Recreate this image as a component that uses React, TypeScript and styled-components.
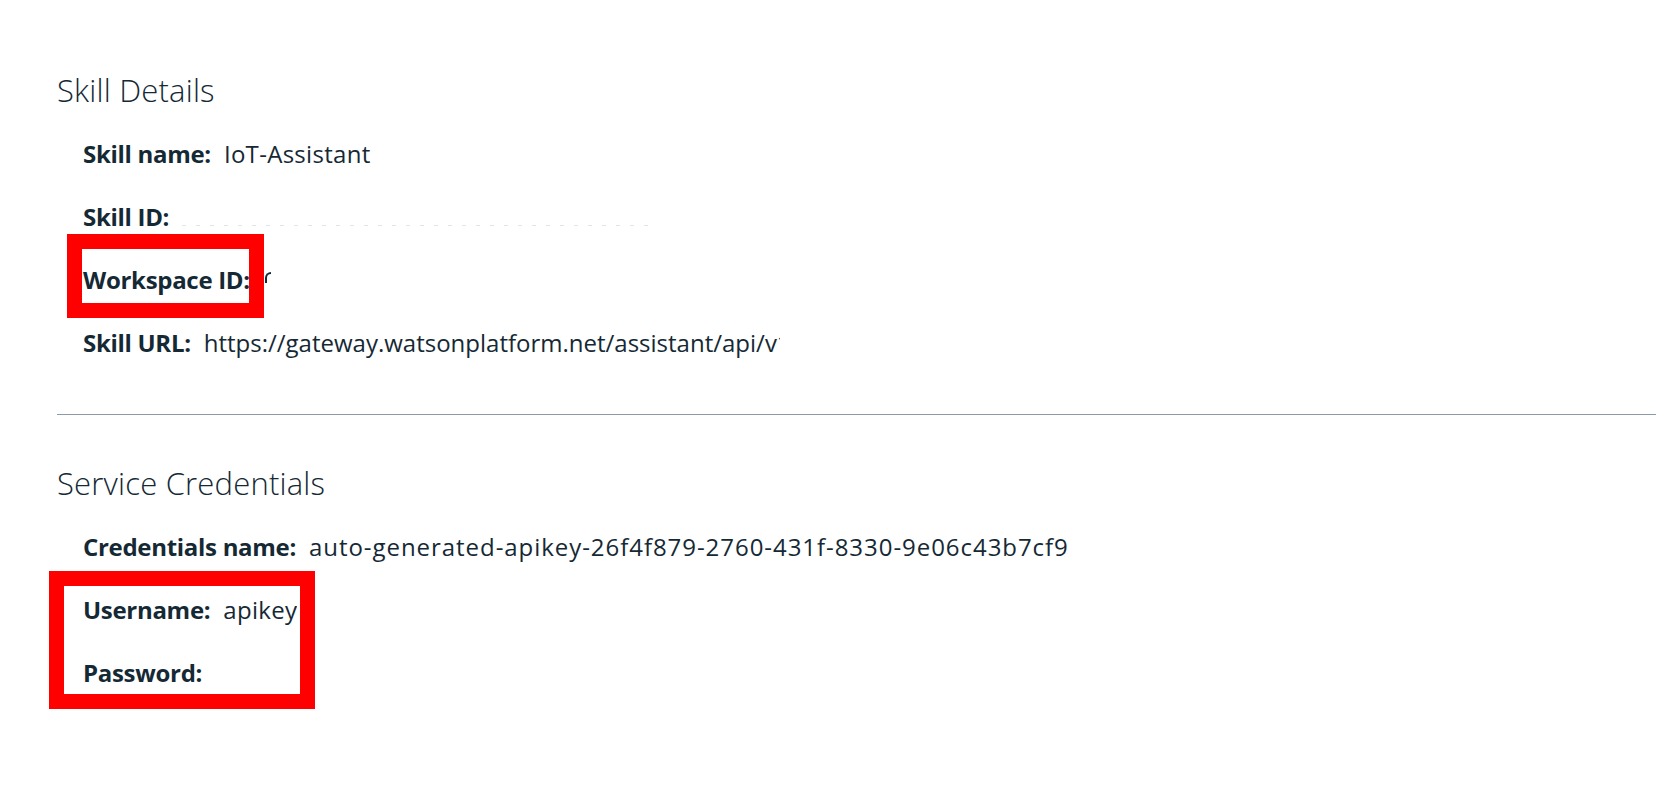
import React from "react";
import styled, { createGlobalStyle } from "styled-components";

const GlobalStyle = createGlobalStyle`
  html, body {
    margin: 0;
    padding: 0;
    background: #ffffff;
  }
  body {
    font-family: "Open Sans", "Noto Sans", "Liberation Sans", sans-serif;
    color: #152935;
  }
`;

const Page = styled.main`
  width: 1656px;
  height: 812px;
  overflow: hidden;
  padding-top: 70px;
  box-sizing: border-box;
`;

const Section = styled.section`
  padding-left: 57px;
`;

const Heading = styled.h2`
  margin: 0;
  font-size: 31px;
  font-weight: 300;
  line-height: 40px;
  letter-spacing: 0.2px;
  color: #152935;
`;

const List = styled.div`
  display: flex;
  flex-direction: column;
  gap: 31px;
  margin-top: 28px;
  padding-left: 26px;
`;

const Row = styled.div`
  position: relative;
  display: flex;
  align-items: baseline;
  font-size: 24px;
  line-height: 32px;
  height: 32px;
  white-space: nowrap;
`;

const Label = styled.strong`
  font-weight: 700;
  letter-spacing: -0.3px;
  margin-right: 13px;
`;

const Value = styled.span<{ $clip?: number; $spacing?: number }>`
  font-weight: 400;
  display: inline-block;
  overflow: hidden;
  letter-spacing: ${(p) => p.$spacing ?? 0}px;
  ${(p) => (p.$clip ? `max-width: ${p.$clip}px;` : "")}
`;

const Remnant = styled.span<{ $width: number }>`
  display: inline-block;
  align-self: flex-end;
  margin-bottom: 7px;
  width: ${(p) => p.$width}px;
  height: 1px;
  background: repeating-linear-gradient(
    to right,
    #e2e4e6 0 4px,
    transparent 4px 14px
  );
`;

const Arc = styled.span`
  display: inline-block;
  align-self: flex-start;
  box-sizing: border-box;
  width: 6px;
  height: 11px;
  margin-top: 8px;
  margin-left: 2px;
  border-left: 2px solid #152935;
  border-top: 2px solid #152935;
  border-radius: 6px 0 0 0;
`;

const Divider = styled.hr`
  margin: 55px 0 48px 57px;
  border: 0;
  height: 1px;
  background: #8c9ba5;
`;

const Highlight = styled.span<{ $top: number; $left: number; $w: number; $h: number }>`
  position: absolute;
  top: ${(p) => p.$top}px;
  left: ${(p) => p.$left}px;
  width: ${(p) => p.$w}px;
  height: ${(p) => p.$h}px;
  box-sizing: border-box;
  border: 15px solid #ff0000;
  pointer-events: none;
`;

const Group = styled.div`
  position: relative;
  display: flex;
  flex-direction: column;
  gap: 31px;
`;

export default function App() {
  return (
    <>
      <GlobalStyle />
      <Page>
        <Section>
          <Heading>Skill Details</Heading>
          <List>
            <Row>
              <Label>Skill name:</Label>
              <Value $spacing={0.3}>IoT-Assistant</Value>
            </Row>
            <Row>
              <Label>Skill ID:</Label>
              <Remnant $width={470} />
            </Row>
            <Row>
              <Label>Workspace ID:</Label>
              <Arc />
              <Highlight $top={-30} $left={-16} $w={197} $h={84} />
            </Row>
            <Row>
              <Label>Skill URL:</Label>
              <Value $clip={576}>https://gateway.watsonplatform.net/assistant/api/v1</Value>
            </Row>
          </List>
        </Section>
        <Divider />
        <Section>
          <Heading>Service Credentials</Heading>
          <List>
            <Row>
              <Label>Credentials name:</Label>
              <Value $spacing={0.95}>auto-generated-apikey-26f4f879-2760-431f-8330-9e06c43b7cf9</Value>
            </Row>
            <Group>
              <Row>
                <Label>Username:</Label>
                <Value $spacing={0.3}>apikey</Value>
              </Row>
              <Row>
                <Label>Password:</Label>
              </Row>
              <Highlight $top={-23} $left={-34} $w={266} $h={138} />
            </Group>
          </List>
        </Section>
      </Page>
    </>
  );
}
